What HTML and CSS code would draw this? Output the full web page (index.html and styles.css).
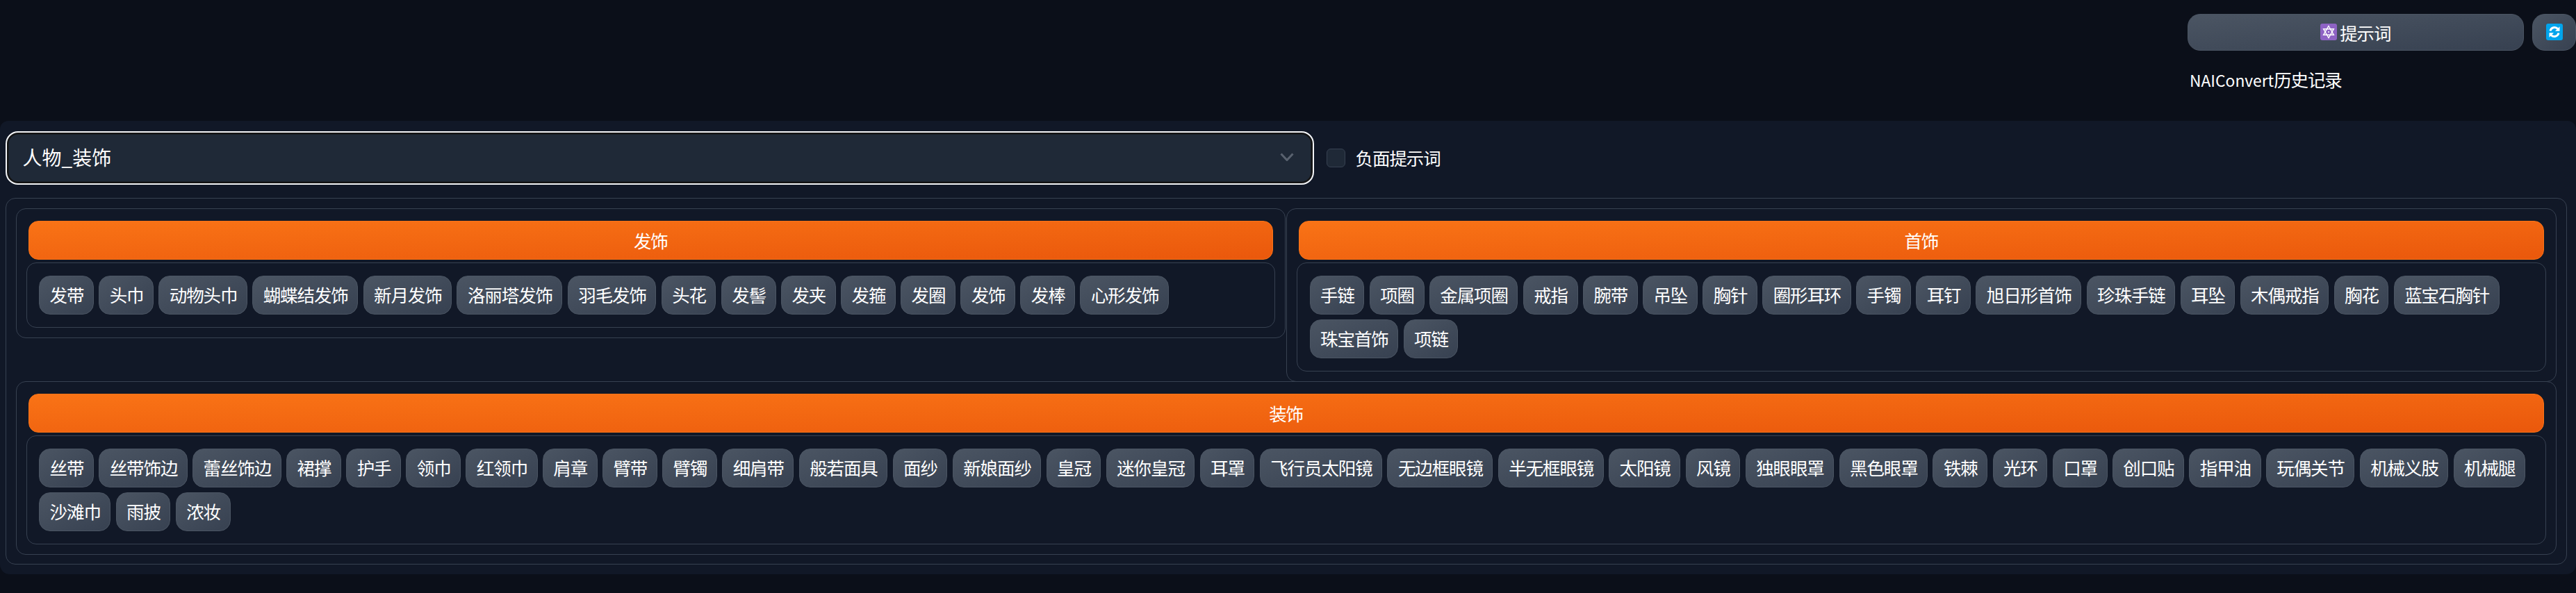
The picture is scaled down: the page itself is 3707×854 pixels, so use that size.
FILE: index.html
```html
<!DOCTYPE html>
<html lang="zh-CN">
<head>
<meta charset="utf-8">
<title>NAIConvert</title>
<link rel="stylesheet" href="styles.css">
</head>
<body>
<header class="top">
  <div class="top-side">
    <div class="top-buttons">
      <button class="btn btn-wide">
        <svg class="emoji" viewBox="0 0 24 24" aria-hidden="true">
          <rect width="24" height="24" rx="3" fill="#8e63c4"/>
          <path d="M12 3.5 19.4 16.3H4.6ZM12 20.5 4.6 7.7H19.4Z" fill="none" stroke="#fff" stroke-width="1.4"/>
          <circle cx="12" cy="12" r="1" fill="#fff"/>
        </svg>
        <span>提示词</span>
      </button>
      <button class="btn btn-icon">
        <svg class="emoji" viewBox="0 0 24 24" aria-hidden="true">
          <rect width="24" height="24" rx="3" fill="#00a4ec"/>
          <path d="M6 10.5A6.3 6.3 0 0 1 16.8 7.6" fill="none" stroke="#fff" stroke-width="3"/>
          <path d="M19.5 4.2V10.8H13Z" fill="#fff"/>
          <path d="M18 13.5A6.3 6.3 0 0 1 7.2 16.4" fill="none" stroke="#fff" stroke-width="3"/>
          <path d="M4.5 19.8V13.2H11Z" fill="#fff"/>
        </svg>
      </button>
    </div>
    <p class="history"><span class="latin">NAIConvert</span>历史记录</p>
  </div>
</header>
<main class="panel">
  <div class="controls">
    <div class="select">
      <span>人物_装饰</span>
      <svg class="chevron" viewBox="0 0 20 12" aria-hidden="true"><path d="M1.5 1.5 10 10.5 18.5 1.5" fill="none" stroke="#59626f" stroke-width="3"/></svg>
    </div>
    <label class="check"><span class="box"></span><span class="check-text">负面提示词</span></label>
  </div>
  <div class="outer">
    <div class="columns">
      <section class="group">
        <h2 class="head">发饰</h2>
        <div class="tags">
          <button class="tag">发带</button><button class="tag">头巾</button><button class="tag">动物头巾</button><button class="tag">蝴蝶结发饰</button><button class="tag">新月发饰</button><button class="tag">洛丽塔发饰</button><button class="tag">羽毛发饰</button><button class="tag">头花</button><button class="tag">发髻</button><button class="tag">发夹</button><button class="tag">发箍</button><button class="tag">发圈</button><button class="tag">发饰</button><button class="tag">发棒</button><button class="tag">心形发饰</button>
        </div>
      </section>
      <section class="group">
        <h2 class="head">首饰</h2>
        <div class="tags">
          <button class="tag">手链</button><button class="tag">项圈</button><button class="tag">金属项圈</button><button class="tag">戒指</button><button class="tag">腕带</button><button class="tag">吊坠</button><button class="tag">胸针</button><button class="tag">圈形耳环</button><button class="tag">手镯</button><button class="tag">耳钉</button><button class="tag">旭日形首饰</button><button class="tag">珍珠手链</button><button class="tag">耳坠</button><button class="tag">木偶戒指</button><button class="tag">胸花</button><button class="tag">蓝宝石胸针</button><button class="tag">珠宝首饰</button><button class="tag">项链</button>
        </div>
      </section>
    </div>
    <section class="group group-full">
      <h2 class="head">装饰</h2>
      <div class="tags">
        <button class="tag">丝带</button><button class="tag">丝带饰边</button><button class="tag">蕾丝饰边</button><button class="tag">裙撑</button><button class="tag">护手</button><button class="tag">领巾</button><button class="tag">红领巾</button><button class="tag">肩章</button><button class="tag">臂带</button><button class="tag">臂镯</button><button class="tag">细肩带</button><button class="tag">般若面具</button><button class="tag">面纱</button><button class="tag">新娘面纱</button><button class="tag">皇冠</button><button class="tag">迷你皇冠</button><button class="tag">耳罩</button><button class="tag">飞行员太阳镜</button><button class="tag">无边框眼镜</button><button class="tag">半无框眼镜</button><button class="tag">太阳镜</button><button class="tag">风镜</button><button class="tag">独眼眼罩</button><button class="tag">黑色眼罩</button><button class="tag">铁棘</button><button class="tag">光环</button><button class="tag">口罩</button><button class="tag">创口贴</button><button class="tag">指甲油</button><button class="tag">玩偶关节</button><button class="tag">机械义肢</button><button class="tag">机械腿</button><button class="tag">沙滩巾</button><button class="tag">雨披</button><button class="tag">浓妆</button>
      </div>
    </section>
  </div>
</main>
```

FILE: styles.css
```css
* { box-sizing: border-box; }
html, body { margin: 0; height: 854px; }
body {
  overflow: hidden;
  background: #0b0f19;
  color: #fff;
  font-family: "Noto Sans CJK SC", "Noto Sans", sans-serif;
  font-size: 25.5px;
  letter-spacing: -1.1px;
}
.top {
  height: 174px;
  padding-top: 20px;
  display: flex;
  justify-content: flex-end;
}
.top-side { width: 559px; }
.top-buttons { display: flex; gap: 12.5px; }
.btn {
  height: 53px;
  display: flex;
  align-items: center;
  justify-content: center;
  gap: 4px;
  border: 1px solid #4b5563;
  border-radius: 18px;
  background: linear-gradient(to bottom right, #4b5563, #374151);
  color: #fff;
  font: inherit;
  letter-spacing: inherit;
  padding: 0 0 1px;
}
.btn-wide { width: 483.5px; }
.btn-icon { width: 63px; }
.emoji { width: 24px; height: 24px; flex: none; }
.history {
  margin: 23px 0 0 3px;
  line-height: 36px;
}
.latin { font-size: 22.8px; letter-spacing: 0; }
.panel {
  height: 653px;
  background: #111827;
  border-radius: 12px 12px 14px 14px;
  padding: 15px 13px 0 7.6px;
}
.controls {
  display: flex;
  align-items: center;
  height: 77px;
  margin-bottom: 19px;
}
.select {
  width: 1883px;
  height: 77px;
  display: flex;
  align-items: center;
  justify-content: space-between;
  padding: 0 27px 3px 23px;
  background: #1f2937;
  border: 2px solid #f3f4f6;
  border-radius: 18px;
  box-shadow: inset 0 0 0 2.5px #141414;
  font-size: 28px;
  letter-spacing: 0;
}
.chevron { width: 20px; height: 12px; }
.check {
  display: flex;
  align-items: center;
  gap: 14.5px;
  margin-left: 18px;
}
.check-text { position: relative; top: -1px; }
.box {
  width: 27.5px;
  height: 27.5px;
  background: #1f2937;
  border: 1px solid #374151;
  border-radius: 6px;
}
.outer {
  width: 3686px;
  height: 528px;
  border: 1px solid #374151;
  border-radius: 14px;
  padding: 14px;
}
.columns {
  display: flex;
  align-items: flex-start;
  height: 249px;
  gap: 1px;
}
.group {
  flex: 1 1 0;
  min-width: 0;
  border: 1px solid #374151;
  border-radius: 14px;
  padding: 17px 14px 14px;
}
.group-full { width: 100%; }
.head {
  margin: 0 3px 4px;
  height: 56px;
  display: flex;
  align-items: center;
  justify-content: center;
  padding-bottom: 2px;
  background: linear-gradient(to bottom right, #f97316, #ea580c);
  border: 1px solid #f97316;
  border-radius: 14px;
  color: #fff;
  font-size: 25.5px;
  font-weight: 400;
}
.tags {
  display: flex;
  flex-wrap: wrap;
  gap: 7.3px;
  border: 1px solid #374151;
  border-radius: 14px;
  padding: 17.5px 17.5px 18.5px;
}
.tag {
  height: 56px;
  padding: 0 13.5px 2px 14.5px;
  border: 1px solid #4b5563;
  border-radius: 16px;
  background: linear-gradient(to bottom right, #4b5563, #374151);
  color: #fff;
  font: inherit;
  letter-spacing: inherit;
  line-height: 1;
}
```
